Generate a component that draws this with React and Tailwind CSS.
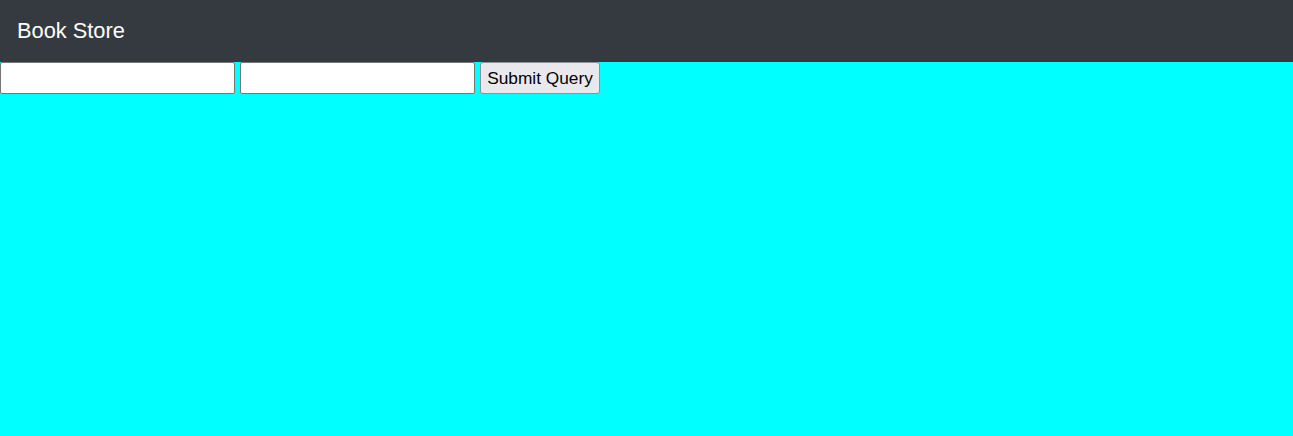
const App = () => {
    return (
        <div className="min-h-screen bg-[#00ffff] font-['Liberation_Sans',Arial,sans-serif]">
            {/* Navbar */}
            <nav className="h-[62px] bg-[#343a40] flex items-center px-[17px] pb-[1px]">
                <span className="text-[21.8px] text-white leading-none">Book Store</span>
            </nav>

            {/* Search form */}
            <form className="flex items-start gap-[5px]" onSubmit={(e) => e.preventDefault()}>
                <input
                    type="text"
                    className="w-[235px] h-[32px] bg-white border border-[#767676] rounded-[2px] px-[2px] text-[16px] outline-none"
                />
                <input
                    type="text"
                    className="w-[235px] h-[32px] bg-white border border-[#767676] rounded-[2px] px-[2px] text-[16px] outline-none"
                />
                <button
                    type="submit"
                    className="w-[120px] h-[32px] pt-[2px] bg-[#e9e9ed] border border-[#8f8f9d] rounded-[3px] text-[17.3px] text-black leading-none"
                >
                    Submit Query
                </button>
            </form>
        </div>
    );
};

export default App;
